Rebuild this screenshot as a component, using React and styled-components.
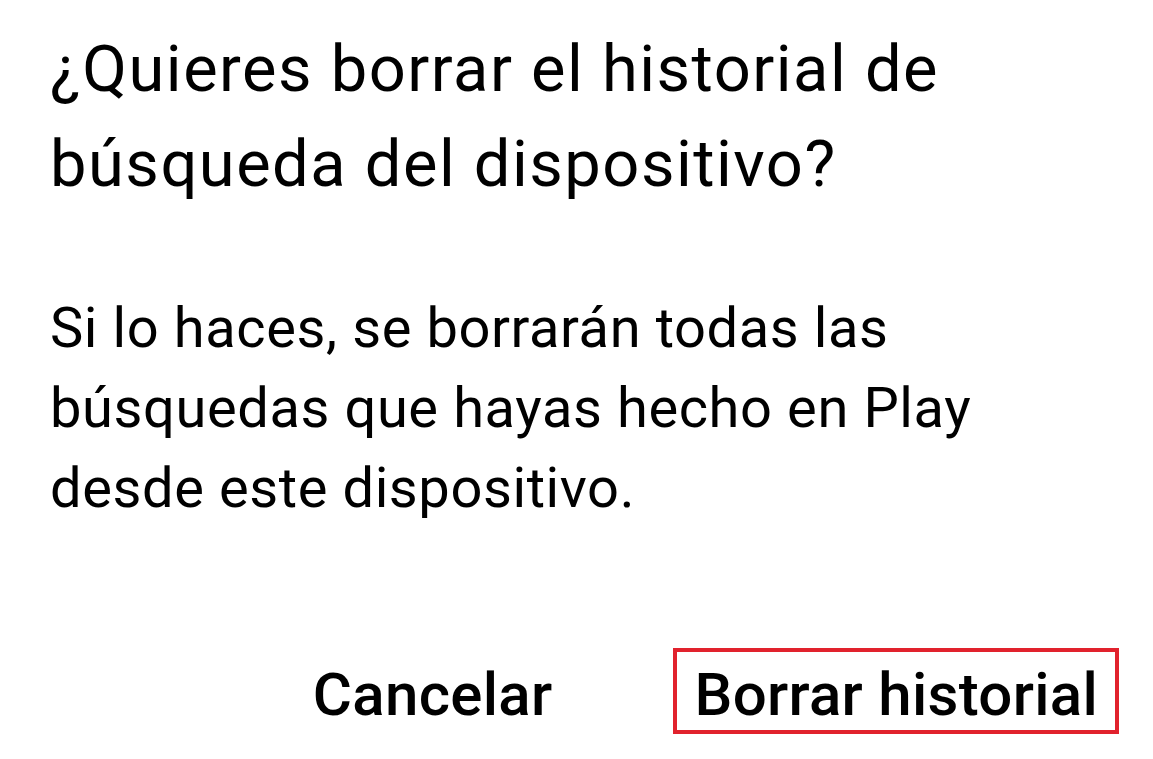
import React from 'react';
import styled, { createGlobalStyle } from 'styled-components';

const GlobalStyle = createGlobalStyle`
  html, body {
    margin: 0;
    padding: 0;
    background: #ffffff;
  }
  body {
    font-family: Roboto, "Noto Sans", sans-serif;
    color: #000000;
  }
`;

const StyledDialog = styled.div`
  width: 1153px;
  height: 759px;
  box-sizing: border-box;
  padding: 22px 34px 0 50px;
  display: flex;
  flex-direction: column;
  background: #ffffff;
`;

const Title = styled.h1`
  margin: 0;
  font-family: Roboto, sans-serif;
  font-weight: 400;
  font-size: 65px;
  line-height: 95px;
  letter-spacing: 1.5px;
`;

const Message = styled.p`
  margin: 76px 0 0 0;
  font-family: Roboto, sans-serif;
  font-weight: 400;
  font-size: 56px;
  line-height: 80px;
  letter-spacing: 0.6px;
`;

const Actions = styled.div`
  margin-top: 120px;
  display: flex;
  justify-content: flex-end;
  align-items: flex-start;
  gap: 100px;
`;

const ActionButton = styled.button`
  box-sizing: border-box;
  height: 86px;
  padding: 7px 17px 0;
  background: transparent;
  border: 4px solid ${({ highlighted }) => (highlighted ? '#e1222d' : 'transparent')};
  font-family: Roboto, sans-serif;
  font-weight: 500;
  font-size: 60px;
  line-height: 71px;
  letter-spacing: 0.3px;
  color: #000000;
  cursor: pointer;
`;

const App = () => {
  return (
    <>
      <GlobalStyle />
      <StyledDialog>
        <Title>
          ¿Quieres borrar el historial de
          <br />
          búsqueda del dispositivo?
        </Title>

        <Message>
          Si lo haces, se borrarán todas las
          <br />
          búsquedas que hayas hecho en Play
          <br />
          desde este dispositivo.
        </Message>

        <Actions>
          <ActionButton>Cancelar</ActionButton>
          <ActionButton highlighted>Borrar historial</ActionButton>
        </Actions>
      </StyledDialog>
    </>
  );
};

export default App;
